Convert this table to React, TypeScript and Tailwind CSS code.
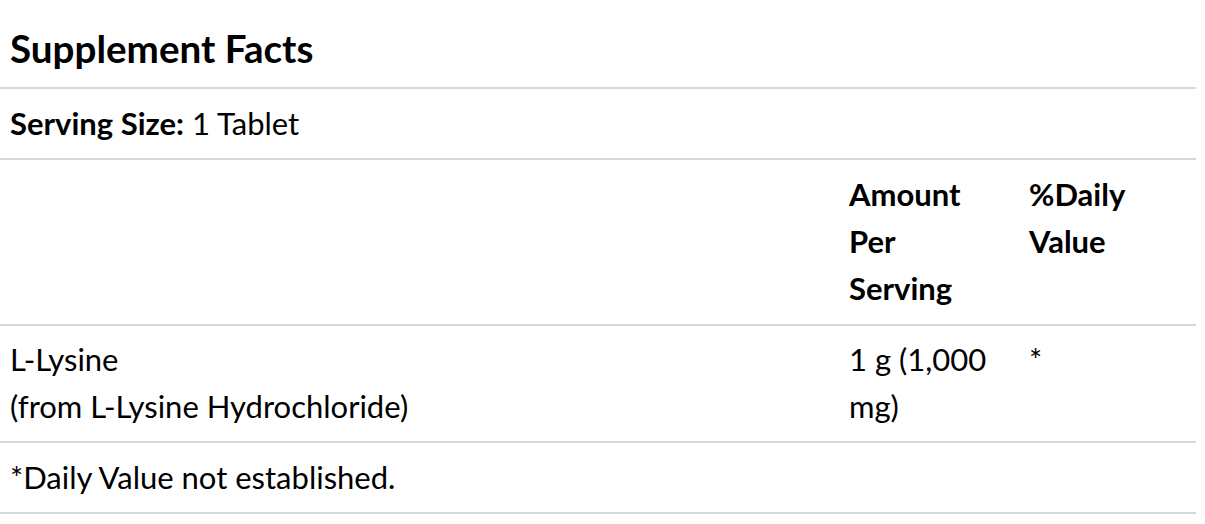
import React from 'react';

const rows = [
  { name: ['L-Lysine', '(from L-Lysine Hydrochloride)'], amount: '1 g (1,000 mg)', dv: '*' },
];

const App: React.FC = () => {
  return (
    <div className="w-[1196px] bg-white text-black font-['Lato','Liberation_Sans',sans-serif] text-[31px] leading-[47px]">
      <h2 className="h-[87px] pl-[10px] pt-[23px] text-[38.6px] font-bold leading-[50px]">Supplement Facts</h2>
      <table className="w-full border-collapse">
        <tbody>
          <tr className="border-t-2 border-[#d8d8d8]">
            <td colSpan={3} className="px-[10px] pt-[11px] pb-[11px]">
              <span className="font-bold">Serving Size:</span> 1 Tablet
            </td>
          </tr>
          <tr className="border-t-2 border-[#d8d8d8] align-top font-bold">
            <td className="px-[10px] pt-[11px] pb-[12px]"></td>
            <td className="w-[180px] pl-[10px] pr-[26px] pt-[11px] pb-[12px]">Amount Per Serving</td>
            <td className="w-[177px] px-[10px] pt-[11px] pb-[12px]">%Daily Value</td>
          </tr>
          {rows.map((r) => (
            <tr key={r.name[0]} className="border-t-2 border-[#d8d8d8] align-top">
              <td className="px-[10px] pt-[10px] pb-[11px]">
                {r.name[0]}
                <br />
                {r.name[1]}
              </td>
              <td className="pl-[10px] pr-[26px] pt-[10px] pb-[11px]">{r.amount}</td>
              <td className="px-[10px] pt-[10px] pb-[11px]">{r.dv}</td>
            </tr>
          ))}
          <tr className="border-y-2 border-[#d8d8d8]">
            <td colSpan={3} className="px-[10px] pt-[11px] pb-[11px]">*Daily Value not established.</td>
          </tr>
        </tbody>
      </table>
    </div>
  );
};

export default App;
